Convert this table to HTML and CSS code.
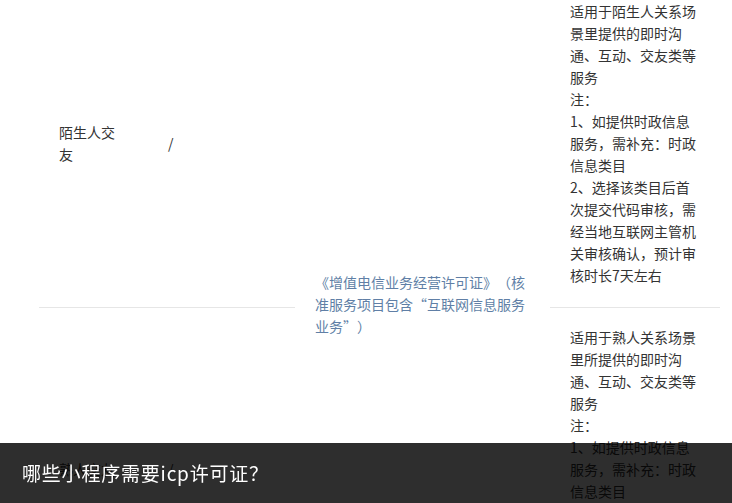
FILE: index.html
```html
<!DOCTYPE html>
<html lang="zh-CN">
<head>
    <meta charset="UTF-8">
    <meta name="viewport" content="width=device-width, initial-scale=1.0">
    <title>哪些小程序需要icp许可证？</title>
    <link rel="stylesheet" href="styles.css">
</head>
<body>
    <div class="article">
        <table class="category-table">
            <colgroup>
                <col class="col-name">
                <col class="col-sub">
                <col class="col-license">
                <col class="col-desc">
            </colgroup>
            <tr>
                <td>陌生人交友</td>
                <td>/</td>
                <td class="license" rowspan="2">《增值电信业务经营许可证》（核准服务项目包含“互联网信息服务业务”）</td>
                <td>适用于陌生人关系场景里提供的即时沟通、互动、交友类等服务<br>注：<br>1、如提供时政信息服务，需补充：时政信息类目<br>2、选择该类目后首次提交代码审核，需经当地互联网主管机关审核确认，预计审核时长7天左右</td>
            </tr>
            <tr>
                <td>熟人交友</td>
                <td>/</td>
                <td>适用于熟人关系场景里所提供的即时沟通、互动、交友类等服务<br>注：<br>1、如提供时政信息服务，需补充：时政信息类目<br>2、选择该类目后首次提交代码审核，需经当地互联网主管机关审核确认，预计审核时长7天左右</td>
            </tr>
        </table>
    </div>

    <div class="title-bar">哪些小程序需要icp许可证？</div>
</body>
</html>
```

FILE: styles.css
```css
body {
    margin: 0;
    background-color: #fff;
    font-family: "Noto Sans CJK SC", "Microsoft YaHei", sans-serif;
    color: #333;
    overflow: hidden;
}

.article {
    padding: 0 12px 0 39px;
}

.category-table {
    width: 681px;
    margin-top: -18px;
    border-collapse: collapse;
    table-layout: fixed;
    font-size: 14px;
    line-height: 22px;
    text-spacing-trim: space-all;
}

.col-name {
    width: 109px;
}

.col-sub {
    width: 147px;
}

.col-license {
    width: 255px;
}

.col-desc {
    width: 170px;
}

.category-table td {
    padding: 18px 20px 21px 20px;
    border-bottom: 1px solid #e6e6e6;
    vertical-align: middle;
    word-break: break-all;
}

.category-table td.license {
    padding-bottom: 25px;
    color: #607fa6;
}

.title-bar {
    position: fixed;
    left: 0;
    right: 0;
    bottom: 0;
    height: 60px;
    line-height: 60px;
    padding-left: 22px;
    background-color: rgba(0, 0, 0, 0.82);
    color: #fff;
    font-size: 19px;
    letter-spacing: 0.8px;
}
```
